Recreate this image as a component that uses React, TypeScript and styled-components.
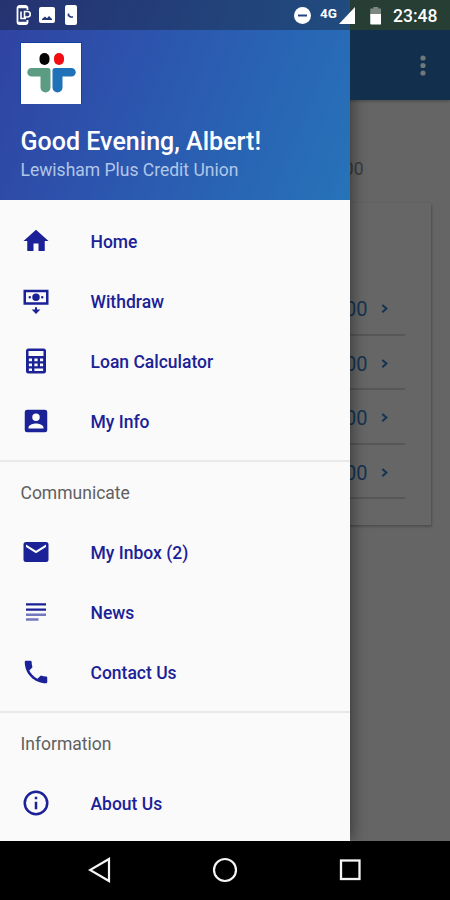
import React from "react";
import styled, { createGlobalStyle } from "styled-components";

const GlobalStyle = createGlobalStyle`
  *, *::before, *::after { box-sizing: border-box; }
  body { margin: 0; background: #000; }
`;

const Screen = styled.div`
  position: relative;
  display: flex;
  flex-direction: column;
  width: 450px;
  height: 900px;
  overflow: hidden;
  background: #000;
  font-family: Roboto, "Noto Sans", sans-serif;
`;

const AccountPage = styled.main`
  display: flex;
  flex-direction: column;
  height: 840.5px;
  background: #656565;
`;

const AppBar = styled.header`
  display: flex;
  justify-content: flex-end;
  align-items: flex-start;
  height: 100px;
  flex: none;
  padding: 54px 20px 0 0;
  background: linear-gradient(#263e34 0 30px, #12304d 30px);
  box-shadow: 0 1px 3px rgba(0, 0, 0, 0.3);
`;

const Total = styled.div`
  height: 103px;
  flex: none;
  padding: 57px 86.5px 0 0;
  font-size: 17.5px;
  line-height: 24px;
  text-align: right;
  color: #3a3a3a;
`;

const Card = styled.section`
  height: 322px;
  margin: 0 19px;
  padding: 78px 26px 0;
  background: #666;
  box-shadow: 1px 2px 2px rgba(0, 0, 0, 0.2), 0 0 2px rgba(0, 0, 0, 0.08);
`;

const AccountRow = styled.div`
  display: flex;
  justify-content: flex-end;
  align-items: center;
  gap: 13px;
  height: 54.5px;
  padding: 4px 17.5px 0 0;
  border-bottom: 2px solid #575757;
  font-size: 20px;
  color: #143450;
`;

const StatusBar = styled.div`
  position: absolute;
  inset: 0 0 auto 0;
  z-index: 2;
  display: flex;
  justify-content: space-between;
  height: 30px;
  padding: 0 12px 0 16px;
  color: #fff;
`;

const StatusGroup = styled.div`
  display: flex;
  align-items: flex-start;
`;

const StatusIcon = styled.svg<{ $top: number; $gap: number }>`
  display: block;
  margin: ${(p) => p.$top}px ${(p) => p.$gap}px 0 0;
`;

const Network = styled.span`
  width: 19px;
  padding-top: 5px;
  font-size: 13.5px;
  line-height: 16px;
  font-weight: 700;
`;

const Clock = styled.span`
  width: 45px;
  padding-top: 5px;
  font-size: 17.5px;
  line-height: 22px;
  font-weight: 500;
  white-space: nowrap;
`;

const Drawer = styled.aside`
  position: absolute;
  top: 0;
  left: 0;
  z-index: 1;
  width: 350.4px;
  height: 840.5px;
  overflow: hidden;
  background: #fafafa;
`;

const DrawerShade = styled.div`
  position: absolute;
  top: 0;
  left: 0;
  width: 350px;
  height: 840px;
  box-shadow: 2px 0 14px rgba(0, 0, 0, 0.45);
  clip-path: inset(100px -24px 0 0);
`;

const Profile = styled.header`
  height: 200px;
  padding: 42px 20px 0;
  background:
    linear-gradient(rgba(20, 25, 35, 0.38) 0 30px, transparent 30px),
    linear-gradient(112deg, #3042a2 0%, #2c55ae 40%, #2673b9 100%);
`;

const Logo = styled.svg`
  display: block;
  width: 62px;
  height: 62px;
  border: 1px solid #123fa0;
  border-bottom-width: 0;
  background: #fff;
`;

const Greeting = styled.h1`
  margin: 23px 0 0 0.5px;
  font-size: 25px;
  line-height: 30px;
  font-weight: 500;
  letter-spacing: 0.02px;
  color: #fff;
  white-space: nowrap;
`;

const Organisation = styled.p`
  margin: 2px 0 0 0.5px;
  font-size: 17.5px;
  line-height: 22px;
  color: #b1c7e8;
  white-space: nowrap;
`;

const Menu = styled.nav`
  padding-top: 11px;
`;

const MenuGroup = styled.div<{ $divided?: boolean }>`
  margin-top: ${(p) => (p.$divided ? 9 : 0)}px;
  border-top: ${(p) => (p.$divided ? "2px solid #e9e9e9" : "0")};
`;

const GroupTitle = styled.h2`
  height: 60px;
  margin: 0;
  padding: 1px 0 0 20.5px;
  font-size: 17.5px;
  line-height: 60px;
  font-weight: 400;
  color: #606060;
`;

const MenuItem = styled.a`
  display: flex;
  align-items: center;
  height: 60px;
  padding: 1px 0 0 20.5px;
  color: #1b2196;
  font-size: 17.5px;
  font-weight: 500;
`;

const MenuIcon = styled.svg`
  width: 30px;
  height: 30px;
  margin: 0 40px 2px 0;
  fill: currentColor;
`;

const NavBar = styled.footer`
  display: grid;
  grid-template-columns: repeat(3, 125px);
  justify-content: center;
  justify-items: center;
  align-items: center;
  height: 59.5px;
  background: #000;
`;

const icons = {
  home: "M10 20v-6h4v6h5v-8h3L12 3 2 12h3v8z",
  withdraw:
    "M2 3h20v12H2zM4 5v8h16V5zM12 6a3 3 0 1 1 0 6 3 3 0 0 1 0-6zM7 8a1 1 0 1 1 0 2 1 1 0 0 1 0-2zM17 8a1 1 0 1 1 0 2 1 1 0 0 1 0-2zM11.2 17h1.6v1.8H15.5L12 22.3 8.5 18.8h2.7z",
  calculator:
    "M6 2h12a2 2 0 0 1 2 2v16a2 2 0 0 1-2 2H6a2 2 0 0 1-2-2V4a2 2 0 0 1 2-2zM6 4v4h12V4zM6.3 10v2.2h2.5V10zM10.7 10v2.2h2.6V10zM15.2 10v2.2h2.5V10zM6.3 14v2.2h2.5V14zM10.7 14v2.2h2.6V14zM15.2 14v2.2h2.5V14zM6.3 18v2h2.5v-2zM10.7 18v2h7v-2z",
  person:
    "M3 5v14a2 2 0 0 0 2 2h14a2 2 0 0 0 2-2V5a2 2 0 0 0-2-2H5a2 2 0 0 0-2 2zm12 4a3 3 0 1 1-6 0 3 3 0 0 1 6 0zm-9 8c0-2 4-3.1 6-3.1s6 1.1 6 3.1v1H6z",
  mail: "M20 4H4a2 2 0 0 0-2 2v12a2 2 0 0 0 2 2h16a2 2 0 0 0 2-2V6a2 2 0 0 0-2-2zm0 4-8 5-8-5V6l8 5 8-5z",
  news: "M4 5h16v1.8H4zM4 9.1h16v1.8H4z",
  phone:
    "M6.62 10.79a15.15 15.15 0 0 0 6.59 6.59l2.2-2.2a1 1 0 0 1 1.02-.24c1.12.37 2.33.57 3.57.57a1 1 0 0 1 1 1V20a1 1 0 0 1-1 1C10.61 21 3 13.39 3 4a1 1 0 0 1 1-1h3.5a1 1 0 0 1 1 1c0 1.25.2 2.45.57 3.57a1 1 0 0 1-.25 1.02z",
  info: "M11 17h2v-6h-2zm1-15a10 10 0 1 0 0 20 10 10 0 0 0 0-20zm0 18a8 8 0 1 1 0-16 8 8 0 0 1 0 16zM11 9h2V7h-2z",
};

type IconName = keyof typeof icons;

function Item({ icon, label }: { icon: IconName; label: string }) {
  return (
    <MenuItem>
      <MenuIcon viewBox="0 0 24 24" aria-hidden="true">
        <path d={icons[icon]} fillRule="evenodd" />
        {icon === "news" && (
          <path d="M4 13.1h16v2H4zM4 17h10v2H4z" opacity="0.6" />
        )}
      </MenuIcon>
      {label}
    </MenuItem>
  );
}

function Status() {
  return (
    <StatusBar>
      <StatusGroup>
        <StatusIcon $top={5} $gap={8} width="15" height="20" viewBox="0 0 15 20">
          <path d="M11.5 5V3a2 2 0 0 0-2-2h-6a2 2 0 0 0-2 2v14a2 2 0 0 0 2 2h6a2 2 0 0 0 2-2v-2" fill="none" stroke="#fff" strokeWidth="1.8" />
          <path d="M2 2.5h9M2 17.5h9" stroke="#fff" strokeWidth="1.6" />
          <path d="M5 6.5v7h5M8.5 6.5h3a2.5 2.500 0 0 1 0 5.500h-3z" fill="none" stroke="#fff" strokeWidth="1.6" />
        </StatusIcon>
        <StatusIcon $top={7} $gap={10} width="16" height="16" viewBox="0 0 16 16">
          <path fillRule="evenodd" fill="#fff" d="M2 0h12a2 2 0 0 1 2 2v12a2 2 0 0 1-2 2H2a2 2 0 0 1-2-2V2a2 2 0 0 1 2-2zM3 13h10v-1l-3-3-2 2.2L6 9.5 3 12z" />
        </StatusIcon>
        <StatusIcon $top={5} $gap={0} width="12" height="20" viewBox="0 0 12 20">
          <rect width="12" height="20" rx="2" fill="#fff" />
          <path d="M3.5 8.5v2l2 1.5H8" fill="none" stroke="#26377c" strokeWidth="1.6" />
        </StatusIcon>
      </StatusGroup>
      <StatusGroup>
        <StatusIcon $top={7} $gap={9} width="17" height="17" viewBox="0 0 17 17">
          <circle cx="8.5" cy="8.5" r="8.5" fill="#fff" />
          <path d="M4 8.5h9" stroke="#244582" strokeWidth="2" />
        </StatusIcon>
        <Network>4G</Network>
        <StatusIcon $top={7} $gap={14.5} width="16" height="17" viewBox="0 0 16 17">
          <path d="M16 0v17H0z" fill="#fff" />
        </StatusIcon>
        <StatusIcon $top={7} $gap={12} width="11.5" height="18" viewBox="0 0 11 18">
          <path d="M3 0h5v1.5h3V8H0V1.5h3z" fill="#7c8782" />
          <path d="M0 7h11v9.5a1 1 0 0 1-1 1H1a1 1 0 0 1-1-1z" fill="#fff" />
        </StatusIcon>
        <Clock>23:48</Clock>
      </StatusGroup>
    </StatusBar>
  );
}

export default function App() {
  return (
    <Screen>
      <GlobalStyle />
      <AccountPage>
        <AppBar>
          <svg width="14" height="24" viewBox="0 0 14 24" fill="#71777b">
            <circle cx="7" cy="4" r="2.6" />
            <circle cx="7" cy="11.5" r="2.6" />
            <circle cx="7" cy="19" r="2.6" />
          </svg>
        </AppBar>
        <Total>0.00</Total>
        <Card>
          {[1, 2, 3, 4].map((account) => (
            <AccountRow key={account}>
              0.00
              <svg width="7" height="10" viewBox="0 0 7 10">
                <path d="M1.3 1 5.4 4.6 1.3 8.2" fill="none" stroke="#143450" strokeWidth="2" />
              </svg>
            </AccountRow>
          ))}
        </Card>
      </AccountPage>
      <DrawerShade />
      <Drawer>
        <Profile>
          <Logo viewBox="0 0 60 61">
            <rect x="18.5" y="10" width="10" height="12" rx="5" fill="#050505" />
            <rect x="33" y="10" width="10" height="12" rx="5" fill="#f20d12" />
            <path d="M10.5 25H27a2.5 2.5 0 0 1 2.5 2.5V44.5a5 5 0 0 1-10 0V33.5h-9a4.2 4.2 0 0 1 0-8.5z" fill="#5b9c83" />
            <path d="M50.5 25H34a2.5 2.5 0 0 0-2.5 2.5V44.5a5 5 0 0 0 10 0V33.5h9a4.2 4.2 0 0 0 0-8.5z" fill="#1f72b8" />
          </Logo>
          <Greeting>Good Evening, Albert!</Greeting>
          <Organisation>Lewisham Plus Credit Union</Organisation>
        </Profile>
        <Menu>
          <MenuGroup>
            <Item icon="home" label="Home" />
            <Item icon="withdraw" label="Withdraw" />
            <Item icon="calculator" label="Loan Calculator" />
            <Item icon="person" label="My Info" />
          </MenuGroup>
          <MenuGroup $divided>
            <GroupTitle>Communicate</GroupTitle>
            <Item icon="mail" label="My Inbox (2)" />
            <Item icon="news" label="News" />
            <Item icon="phone" label="Contact Us" />
          </MenuGroup>
          <MenuGroup $divided>
            <GroupTitle>Information</GroupTitle>
            <Item icon="info" label="About Us" />
          </MenuGroup>
        </Menu>
      </Drawer>
      <Status />
      <NavBar>
        <svg width="24" height="26" viewBox="0 0 24 26">
          <path d="M21 2v22L2 13z" fill="none" stroke="#f5f5f5" strokeWidth="2.2" />
        </svg>
        <svg width="26" height="26" viewBox="0 0 26 26">
          <circle cx="13" cy="13" r="11" fill="none" stroke="#f5f5f5" strokeWidth="2.2" />
        </svg>
        <svg width="26" height="26" viewBox="0 0 26 26">
          <rect x="4" y="3.5" width="18.5" height="18.5" fill="none" stroke="#f5f5f5" strokeWidth="2.3" />
        </svg>
      </NavBar>
    </Screen>
  );
}
